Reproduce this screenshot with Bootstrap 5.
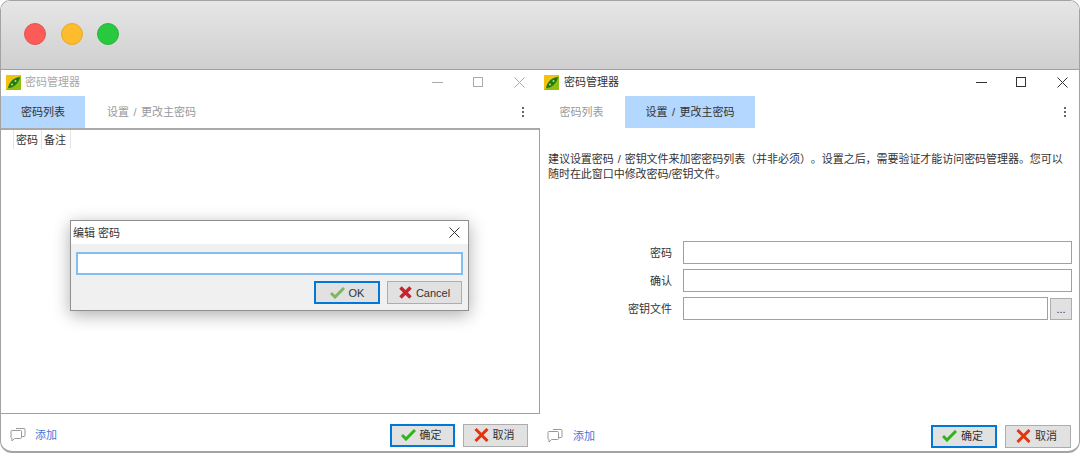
<!DOCTYPE html>
<html lang="zh-CN">
<head>
<meta charset="utf-8">
<title>密码管理器</title>
<link rel="stylesheet" href="https://cdn.jsdelivr.net/npm/bootstrap@5.3.0/dist/css/bootstrap.min.css">
<style>
html,body{margin:0;height:453px;overflow:hidden;background:#fff}
body{font-family:"Liberation Sans","Noto Sans CJK SC",sans-serif;font-size:11px;line-height:14px;color:#333;text-spacing-trim:space-all}
.mac-frame{width:1080px;height:453px;border:1px solid #a3a3a3;border-bottom-width:2px;border-radius:10px 10px 12px 12px;overflow:hidden;display:flex;flex-direction:column}
.mac-bar{height:69px;flex:none;background:linear-gradient(#e6e6e6,#cfcfcf);border-bottom:1px solid #a0a0a0;display:flex;align-items:center;padding:0 0 0 23px;gap:14.500px}
.light{width:22px;height:22px;border-radius:50%;display:block;margin-top:-2px}
.light-r{background:#fc5b57;border:1px solid #e5534f}
.light-y{background:#fdbc2c;border:1px solid #e8aa26}
.light-g{background:#28c83f;border:1px solid #25b63a}
.panes{flex:1;display:flex;min-height:0}
.pane{display:flex;flex-direction:column;min-width:0;position:relative;width:539px}
.win-title{height:26px;flex:none;display:flex;align-items:center;padding-left:5px;padding-bottom:2px;gap:4px;word-spacing:1px}
.pane-r .win-title{padding-left:4px;gap:5px;color:#333}
.pane-l .win-title{color:#a8a8a8}
.win-ctrls{margin-left:auto;display:flex;align-items:center;gap:30px}
.win-ctrl{width:11px;height:11px;display:flex;align-items:center;justify-content:center}
.win-ctrl:nth-child(2){margin-left:-1px;margin-right:1px}
.pane-l .win-ctrls{margin-right:15px;color:#aaa}
.pane-r .win-ctrls{margin-right:11px;color:#333}
.pane-r .win-ctrl:first-child{margin-left:0;margin-right:-1px}
.tabrow{height:32px;flex:none;display:flex;align-items:stretch}
.tabitem{display:flex;align-items:center;justify-content:center;color:#999;word-spacing:1.500px}
.tabitem.on{background:#b3d7ff;color:#333}
.pane-l .t1{width:84px}.pane-l .t2{width:133px}
.pane-r .t1{width:85px;padding-right:2px}.pane-r .t2{width:130px}
.dots{margin-left:auto;width:34px;display:flex;flex-direction:column;align-items:center;justify-content:center;gap:2px}
.pane-r .dots{width:28px}
.dots i{width:2px;height:2px;background:#666;display:block}
.listbox{flex:1;border:1px solid #a0a0a0;border-left:0;border-top-width:2px;border-top-color:#a9a9a9;padding-left:12px;background:#fff}
.heads{display:flex;height:19px}
.heads span{padding:0 2px 0 2px;width:29px;border-right:1px solid #e5e5e5;display:flex;align-items:center;color:#333;white-space:nowrap}
.heads span:first-child{border-left:1px solid #e5e5e5}
.foot{height:37px;flex:none;display:flex;align-items:center}
.pane-l .foot{padding:5px 12px 0 9px}
.pane-r .foot{padding:7px 8px 0 7px}
.addlink{color:#3f78d8;text-decoration:none;margin-left:9px}
.pane-r .addlink{margin-left:10px}
.wbtn{height:23px;display:inline-flex;align-items:center;justify-content:center;gap:4px;background:#e1e1e1;border:1px solid #adadad;color:#333;padding:0;font-size:11px;line-height:14px;border-radius:0}
.wbtn.def{border:2px solid #0078d7}
.btns{margin-left:auto;display:flex;gap:8px}
.btns .wbtn{width:65px;padding-right:3px}
.pane-r .btns .wbtn{width:66px}
.body-txt{margin:24px 0 0 8px;width:520px;color:#333;line-height:15px;word-spacing:1px;letter-spacing:-.05px}
.formgrid{margin-top:59px;display:flex;flex-direction:column;gap:5px;padding:0 7px 0 0}
.frow{display:flex;align-items:center;height:23px}
.flabel{width:132px;text-align:right;flex:none;color:#333}
.finput{flex:1;width:auto;margin-left:11px;height:23px;border:1px solid #a0a0a0;background:#fff;min-width:0;padding:0;border-radius:0;box-shadow:none}
.morebtn{width:22px;height:22px;margin-left:2px;flex:none;background:#e1e1e1;border:1px solid #adadad;font-size:11px;color:#333;padding:0;line-height:14px}
.dlg{position:absolute;left:69px;top:150px;width:399px;height:91px;border:1px solid #8f8f8f;background:#f0f0f0;box-shadow:0 4px 16px rgba(0,0,0,.32);display:flex;flex-direction:column}
.dlg-head{height:23px;flex:none;background:#fff;display:flex;align-items:center;justify-content:space-between;padding:0 8px 0 2px;color:#333}
.dlg-input{width:auto;margin:8px 5px 0 5px;height:23px;border:2px solid #85bdee;background:#fff;flex:none;padding:0;border-radius:0;box-shadow:none}
.dlg-btns{display:flex;justify-content:flex-end;gap:7px;padding:6px 6px 0 0}
.dlg-btns .ok{width:66px}.dlg-btns .cn{width:75px}
</style>
</head>
<body>
<div class="mac-frame">
  <div class="mac-bar"><span class="light light-r"></span><span class="light light-y"></span><span class="light light-g"></span></div>
  <div class="panes">

    <section class="pane pane-l">
      <div class="win-title">
        <svg width="15" height="15" viewBox="0 0 15 15"><rect width="15" height="15" fill="#8fbf10"/><path d="M0 0h15L0 15z" fill="#f2c211"/><path d="M2 13C3 7 8 2 14 2 13 8 8 13 2 13z" fill="#1e7a1a"/><circle cx="6" cy="9.500" r="1" fill="#c8e24a"/><circle cx="9.500" cy="6" r="1" fill="#c8e24a"/></svg>
        <span>密码管理器</span>
        <div class="win-ctrls">
          <span class="win-ctrl"><svg width="11" height="11" viewBox="0 0 11 11"><path d="M0 5.500h11" stroke="currentColor"/></svg></span>
          <span class="win-ctrl"><svg width="10" height="10" viewBox="0 0 10 10"><rect x=".5" y=".5" width="9" height="9" fill="none" stroke="currentColor"/></svg></span>
          <span class="win-ctrl"><svg width="11" height="11" viewBox="0 0 11 11"><path d="M.5.500l10 10M10.500.500l-10 10" stroke="currentColor"/></svg></span>
        </div>
      </div>
      <div class="tabrow">
        <div class="tabitem on t1">密码列表</div>
        <div class="tabitem t2">设置 / 更改主密码</div>
        <div class="dots"><i></i><i></i><i></i></div>
      </div>
      <div class="listbox">
        <div class="heads"><span>密码</span><span>备注</span></div>
      </div>
      <div class="foot">
        <svg width="16" height="16" viewBox="0 0 16 16" fill="#fff" stroke="#999"><path d="M6 1.500h8a1 1 0 0 1 1 1v6a1 1 0 0 1-1 1h-2"/><path d="M2 3.500h8.500a1 1 0 0 1 1 1v6a1 1 0 0 1-1 1H4.500l-2.500 2.500v-2.500a1 1 0 0 1-1-1v-6a1 1 0 0 1 1-1z"/></svg>
        <a class="addlink" href="#">添加</a>
        <div class="btns">
          <button class="wbtn def" type="button"><svg width="15" height="12" viewBox="0 0 15 12"><path d="M1 6l4 4 9-9" fill="none" stroke="#2fb51a" stroke-width="3"/></svg>确定</button>
          <button class="wbtn" type="button"><svg width="15" height="14" viewBox="0 0 15 14"><path d="M1.500 1l12 12M13.500 1l-12 12" stroke="#e2350f" stroke-width="3"/></svg>取消</button>
        </div>
      </div>
      <div class="dlg">
        <div class="dlg-head"><span>编辑 密码</span><svg width="11" height="11" viewBox="0 0 11 11"><path d="M.5.500l10 10M10.500.500l-10 10" stroke="#333"/></svg></div>
        <input class="dlg-input form-control" type="text" aria-label="密码">
        <div class="dlg-btns">
          <button class="wbtn def ok" type="button"><svg width="15" height="12" viewBox="0 0 15 12"><path d="M1 6l4 4 9-9" fill="none" stroke="#7fb65f" stroke-width="3"/></svg>OK</button>
          <button class="wbtn cn" type="button"><svg width="13" height="13" viewBox="0 0 13 13"><path d="M1.500 1.500l10 10M11.500 1.500l-10 10" stroke="#c9242b" stroke-width="3.500"/></svg>Cancel</button>
        </div>
      </div>
    </section>

    <section class="pane pane-r">
      <div class="win-title">
        <svg width="15" height="15" viewBox="0 0 15 15"><rect width="15" height="15" fill="#8fbf10"/><path d="M0 0h15L0 15z" fill="#f2c211"/><path d="M2 13C3 7 8 2 14 2 13 8 8 13 2 13z" fill="#1e7a1a"/><circle cx="6" cy="9.500" r="1" fill="#c8e24a"/><circle cx="9.500" cy="6" r="1" fill="#c8e24a"/></svg>
        <span>密码管理器</span>
        <div class="win-ctrls">
          <span class="win-ctrl"><svg width="11" height="11" viewBox="0 0 11 11"><path d="M0 5.500h11" stroke="currentColor"/></svg></span>
          <span class="win-ctrl"><svg width="10" height="10" viewBox="0 0 10 10"><rect x=".5" y=".5" width="9" height="9" fill="none" stroke="currentColor"/></svg></span>
          <span class="win-ctrl"><svg width="11" height="11" viewBox="0 0 11 11"><path d="M.5.500l10 10M10.500.500l-10 10" stroke="currentColor"/></svg></span>
        </div>
      </div>
      <div class="tabrow">
        <div class="tabitem t1">密码列表</div>
        <div class="tabitem on t2">设置 / 更改主密码</div>
        <div class="dots"><i></i><i></i><i></i></div>
      </div>
      <div class="flex-grow-1">
        <p class="body-txt">建议设置密码 / 密钥文件来加密密码列表（并非必须）。设置之后，需要验证才能访问密码管理器。您可以随时在此窗口中修改密码/密钥文件。</p>
        <div class="formgrid">
          <div class="frow"><label class="flabel">密码</label><input class="finput form-control" type="password"></div>
          <div class="frow"><label class="flabel">确认</label><input class="finput form-control" type="password"></div>
          <div class="frow"><label class="flabel">密钥文件</label><input class="finput form-control" type="text"><button class="morebtn" type="button">...</button></div>
        </div>
      </div>
      <div class="foot">
        <svg width="16" height="16" viewBox="0 0 16 16" fill="#fff" stroke="#999"><path d="M6 1.500h8a1 1 0 0 1 1 1v6a1 1 0 0 1-1 1h-2"/><path d="M2 3.500h8.500a1 1 0 0 1 1 1v6a1 1 0 0 1-1 1H4.500l-2.500 2.500v-2.500a1 1 0 0 1-1-1v-6a1 1 0 0 1 1-1z"/></svg>
        <a class="addlink" href="#">添加</a>
        <div class="btns">
          <button class="wbtn def" type="button"><svg width="15" height="12" viewBox="0 0 15 12"><path d="M1 6l4 4 9-9" fill="none" stroke="#2fb51a" stroke-width="3"/></svg>确定</button>
          <button class="wbtn" type="button"><svg width="15" height="14" viewBox="0 0 15 14"><path d="M1.500 1l12 12M13.500 1l-12 12" stroke="#e2350f" stroke-width="3"/></svg>取消</button>
        </div>
      </div>
    </section>
  </div>
</div>
<script src="https://cdn.jsdelivr.net/npm/bootstrap@5.3.0/dist/js/bootstrap.bundle.min.js"></script>
</body>
</html>
